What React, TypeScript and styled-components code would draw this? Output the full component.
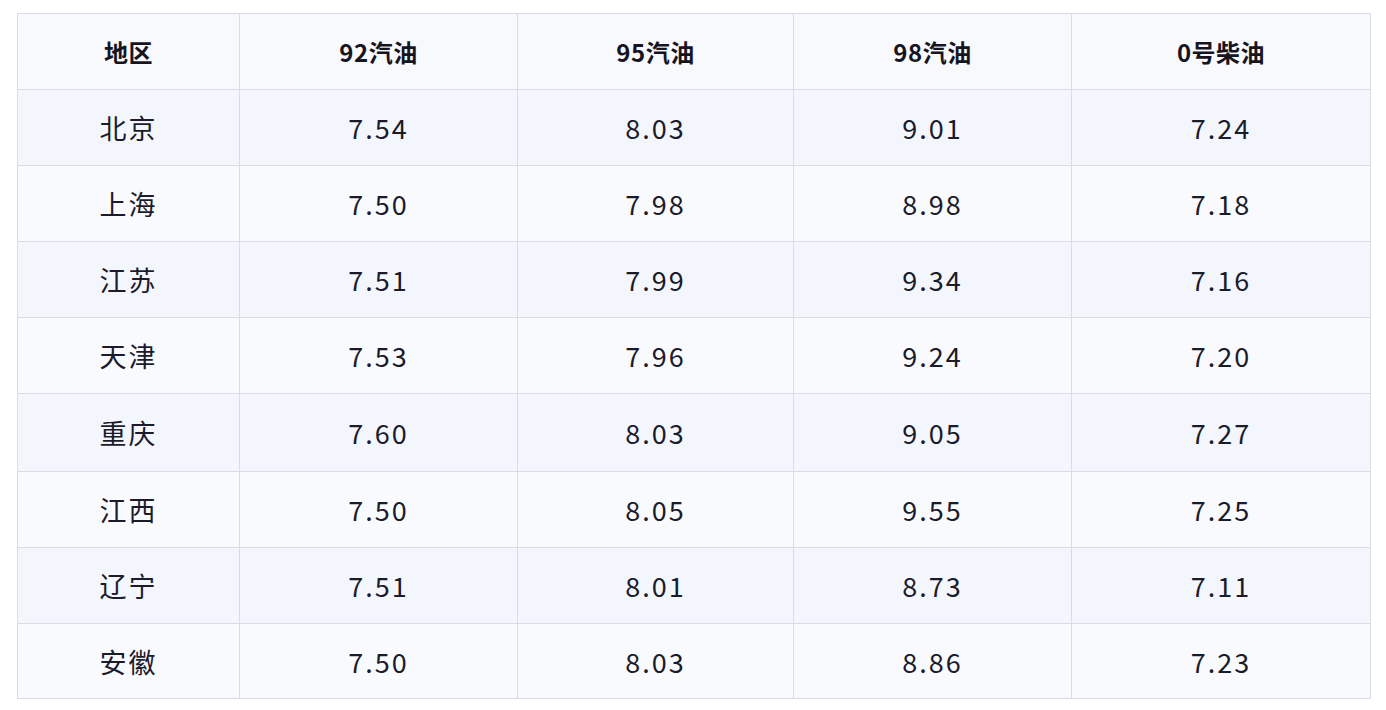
import React from "react";
import styled, { createGlobalStyle } from "styled-components";

const GlobalStyle = createGlobalStyle`
  body {
    margin: 0;
    background: #ffffff;
    font-family: "Noto Sans CJK SC", "Noto Sans", sans-serif;
  }
`;

const Page = styled.div`
  padding: 13px 17px 12px 17px;
`;

const Table = styled.table`
  width: 1353px;
  border-collapse: collapse;
  table-layout: fixed;
  color: #1c1b2b;
`;

const HeadCell = styled.th`
  height: 75px;
  padding: 0;
  border: 1px solid #d9dce2;
  background: #f8f9fc;
  font-size: 24px;
  font-weight: 700;
  letter-spacing: 0.5px;
  color: #16151f;
  text-align: center;
  vertical-align: middle;
`;

const Row = styled.tr<{ $alt: boolean }>`
  background: ${(p) => (p.$alt ? "#f9fafd" : "#f3f7fd")};
`;

const Cell = styled.td<{ $h: number }>`
  height: ${(p) => p.$h}px;
  padding: 0;
  border: 1px solid #d9dce2;
  font-size: 27px;
  font-weight: 400;
  letter-spacing: 2px;
  text-align: center;
  vertical-align: middle;
`;

const columns = [
  { label: "地区", width: 222 },
  { label: "92汽油", width: 278 },
  { label: "95汽油", width: 276 },
  { label: "98汽油", width: 278 },
  { label: "0号柴油", width: 299 },
];

const prices = [
  ["北京", "7.54", "8.03", "9.01", "7.24"],
  ["上海", "7.50", "7.98", "8.98", "7.18"],
  ["江苏", "7.51", "7.99", "9.34", "7.16"],
  ["天津", "7.53", "7.96", "9.24", "7.20"],
  ["重庆", "7.60", "8.03", "9.05", "7.27"],
  ["江西", "7.50", "8.05", "9.55", "7.25"],
  ["辽宁", "7.51", "8.01", "8.73", "7.11"],
  ["安徽", "7.50", "8.03", "8.86", "7.23"],
];

// row heights measured from the screenshot (content height, border excluded)
const rowHeights = [75, 75, 75, 75, 77, 75, 75, 74];

function App() {
  return (
    <Page>
      <GlobalStyle />
      <Table>
        <colgroup>
          {columns.map((c) => (
            <col key={c.label} style={{ width: c.width }} />
          ))}
        </colgroup>
        <thead>
          <tr>
            {columns.map((c) => (
              <HeadCell key={c.label}>{c.label}</HeadCell>
            ))}
          </tr>
        </thead>
        <tbody>
          {prices.map((row, i) => (
            <Row key={row[0]} $alt={i % 2 === 1}>
              {row.map((v, j) => (
                <Cell key={j} $h={rowHeights[i]}>
                  {v}
                </Cell>
              ))}
            </Row>
          ))}
        </tbody>
      </Table>
    </Page>
  );
}

export default App;
